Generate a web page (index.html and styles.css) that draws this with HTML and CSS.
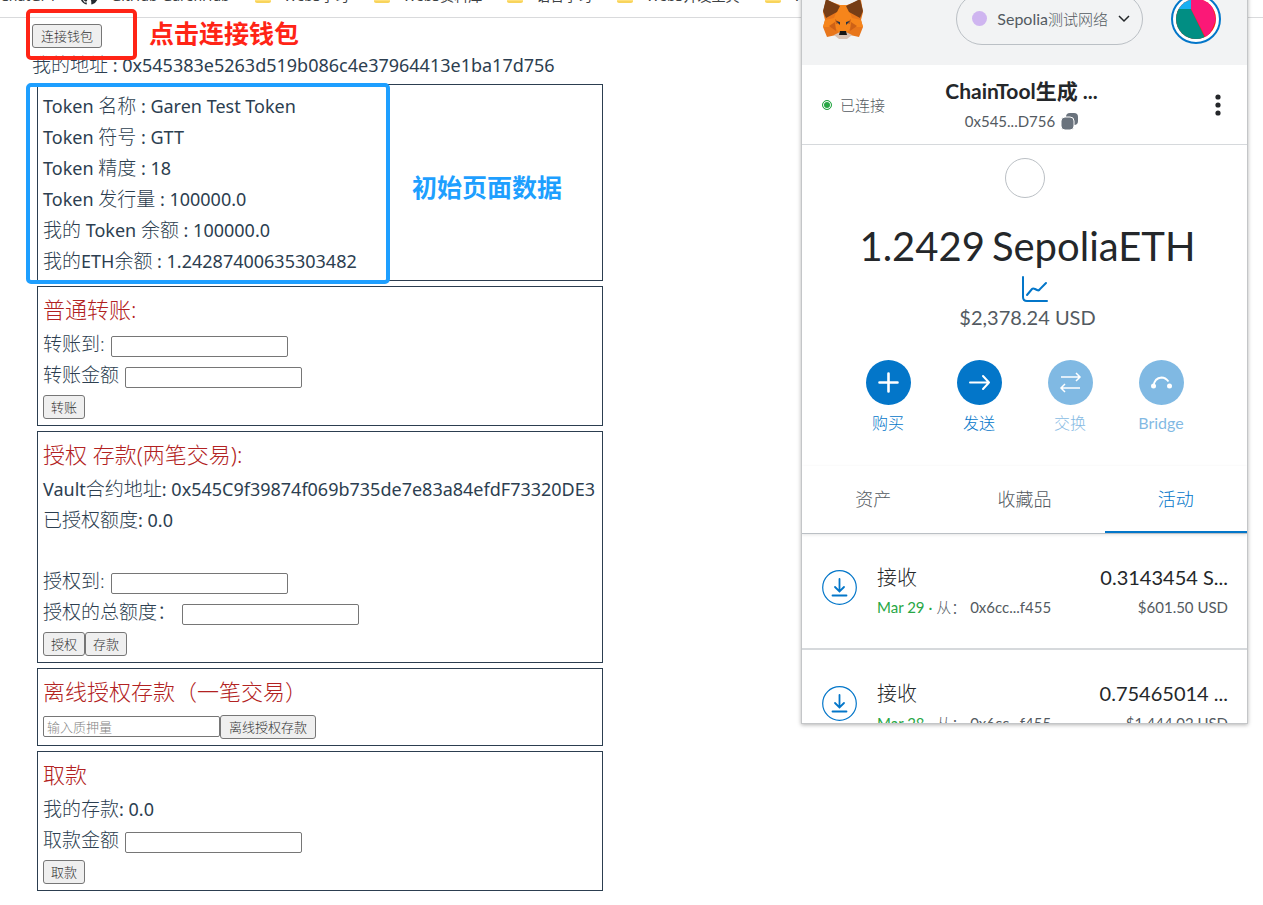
FILE: index.html
```html
<!DOCTYPE html>
<html lang="zh-CN">
<head>
<meta charset="utf-8">
<title>Token Bank</title>
<link rel="stylesheet" href="styles.css">
</head>
<body>
<nav class="bookmarks">
  <a href="#" class="mark mark-first">ChatGPT</a>
  <a href="#" class="mark mark-github"><svg width="18" height="18" viewBox="0 0 16 16"><path fill="#24292f" d="M8 0C3.58 0 0 3.58 0 8c0 3.54 2.29 6.53 5.47 7.59.4.07.55-.17.55-.38v-1.49c-2.01.37-2.53-.49-2.69-.94-.09-.23-.48-.94-.82-1.13-.28-.15-.68-.52-.01-.53.63-.01 1.08.58 1.23.82.72 1.21 1.87.87 2.33.66.07-.52.28-.87.51-1.07-1.78-.2-3.64-.89-3.64-3.95 0-.87.31-1.59.82-2.15-.08-.2-.36-1.02.08-2.12 0 0 .67-.21 2.2.82a7.6 7.6 0 0 1 4 0c1.53-1.04 2.2-.82 2.2-.82.44 1.1.16 1.92.08 2.12.51.56.82 1.27.82 2.15 0 3.07-1.87 3.75-3.65 3.95.29.25.54.73.54 1.48v2.2c0 .21.15.46.55.38A8 8 0 0 0 16 8c0-4.42-3.58-8-8-8z"/></svg>GitHub-GarenHub</a>
  <a href="#" class="mark"><i class="folder"></i>Web3学习</a>
  <a href="#" class="mark"><i class="folder"></i>Web3资料库</a>
  <a href="#" class="mark"><i class="folder"></i>语言学习</a>
  <a href="#" class="mark"><i class="folder"></i>Web3开发工具</a>
  <a href="#" class="mark"><i class="folder"></i>Web3</a>
</nav>

<main class="page">
  <div class="connect"><button type="button" class="btn">连接钱包</button><span class="frame frame-red"></span><strong class="note note-red">点击连接钱包</strong></div>
  <p class="address"><span class="zh">我的地址</span> : 0x545383e5263d519b086c4e37964413e1ba17d756</p>

  <section class="card card-info">
    <p class="row">Token&nbsp;<span class="zh">名称</span>&nbsp;: Garen Test Token</p>
    <p class="row">Token&nbsp;<span class="zh">符号</span>&nbsp;: GTT</p>
    <p class="row">Token&nbsp;<span class="zh">精度</span>&nbsp;: 18</p>
    <p class="row">Token&nbsp;<span class="zh">发行量</span>&nbsp;: 100000.0</p>
    <p class="row"><span class="zh">我的</span>&nbsp;Token&nbsp;<span class="zh">余额</span>&nbsp;: 100000.0</p>
    <p class="row"><span class="zh">我的</span>ETH<span class="zh">余额</span>&nbsp;: 1.24287400635303482</p>
    <span class="frame frame-blue"></span>
    <strong class="note note-blue">初始页面数据</strong>
  </section>

  <section class="card">
    <h2 class="title">普通转账:</h2>
    <div class="row"><label class="zh" for="to">转账到:</label><input class="field" id="to" type="text"></div>
    <div class="row"><label class="zh" for="amount">转账金额</label><input class="field" id="amount" type="text"></div>
    <div class="row"><button type="button" class="btn">转账</button></div>
  </section>

  <section class="card">
    <h2 class="title">授权 存款(两笔交易):</h2>
    <p class="row">Vault<span class="zh">合约地址</span>: 0x545C9f39874f069b735de7e83a84efdF73320DE3</p>
    <p class="row"><span class="zh">已授权额度</span>: 0.0</p>
    <p class="row row-blank"></p>
    <div class="row"><label class="zh" for="spender">授权到:</label><input class="field" id="spender" type="text"></div>
    <div class="row"><label class="zh" for="allow">授权的总额度：</label><input class="field" id="allow" type="text"></div>
    <div class="row"><button type="button" class="btn">授权</button><button type="button" class="btn">存款</button></div>
  </section>

  <section class="card">
    <h2 class="title">离线授权存款（一笔交易）</h2>
    <div class="row"><input class="field field-lead" type="text" placeholder="输入质押量" aria-label="输入质押量"><button type="button" class="btn">离线授权存款</button></div>
  </section>

  <section class="card">
    <h2 class="title">取款</h2>
    <p class="row"><span class="zh">我的存款</span>: 0.0</p>
    <div class="row"><label class="zh" for="draw">取款金额</label><input class="field" id="draw" type="text"></div>
    <div class="row"><button type="button" class="btn">取款</button></div>
  </section>
</main>

<aside class="wallet">
  <header class="wallet-head">
    <svg class="fox" width="42" height="40" viewBox="0 0 40 40">
      <path fill="#e8761b" d="M3 1 17 6h7L38 1l2 12-2 8 2 7-4 10-9-2-3 3h-8l-3-3-9 2L0 28l2-7-2-8z"/>
      <path fill="#f6851b" d="M16 6h8l5 13 9 2 2 7H28l-4 6h-8l-4-6H0l2-7 9-2z"/>
      <path fill="#763d16" d="M3 0 17 7l-3 6-11 6-3-7zM37 0 23 7l3 6 11 6 3-7z"/>
      <path fill="#cd6116" d="m6 27 6-4 1 9zM34 27l-6-4-1 9zM12 20l5 4-4 1zM28 20l-5 4 4 1z"/>
      <path fill="#d7c1b3" d="m11 36 6-3h6l6 3-5 4h-8z"/>
      <path fill="#233447" d="m13 22 4 1v3zM27 22l-4 1v3z"/>
      <path fill="#161616" d="M17 32h6l1 4h-8z"/>
    </svg>
    <button type="button" class="network"><i class="network-dot"></i><span><span class="latin">Sepolia</span>测试网络</span><svg width="12" height="8" viewBox="0 0 12 8" fill="none" stroke="#24272a" stroke-width="1.500"><path d="m1 1 5 5 5-5"/></svg></button>
    <svg class="avatar" width="50" height="50" viewBox="0 0 50 50">
      <circle cx="25" cy="25" r="24" fill="#fff" stroke="#0376c9" stroke-width="2"/>
      <clipPath id="disc"><circle cx="25" cy="25" r="20"/></clipPath>
      <g clip-path="url(#disc)"><path fill="#fc1e12" d="M0 0h50v50H0z"/><path fill="#018e83" d="M0 15h20l17 35H0z"/><path fill="#18b0f2" d="M0 0h20v15H0z"/><path fill="#fb1877" d="M20 0h18l7 26-9 20-16-31z"/></g>
    </svg>
  </header>
  <div class="account">
    <span class="status"><i class="status-dot"></i>已连接</span>
    <button type="button" class="account-id"><strong class="account-name">ChainTool生成 ...</strong><span class="account-addr">0x545...D756<svg width="17" height="17" viewBox="0 0 17 17"><rect x="5" width="12" height="12" rx="4" fill="#6a737d"/><rect y="4" width="13" height="13" rx="4" fill="#6a737d" stroke="#fff"/></svg></span></button>
    <button type="button" class="more" aria-label="更多"><svg width="6" height="22" viewBox="0 0 6 22" fill="#24272a"><circle cx="3" cy="3" r="2.6"/><circle cx="3" cy="11" r="2.6"/><circle cx="3" cy="19" r="2.6"/></svg></button>
  </div>
  <section class="overview">
    <i class="token"></i>
    <p class="balance"><span>1.2429</span><span>SepoliaETH</span></p>
    <svg class="chart" width="26" height="26" viewBox="0 0 26 26" fill="none" stroke="#0376c9" stroke-width="2" stroke-linecap="round"><path d="M1 1v20q0 4 4 4h20"/><path d="m5 19 5-6q1-1 3 0l2 1q2 1 3-1l6-6"/></svg>
    <p class="fiat">$2,378.24 USD</p>
    <div class="actions">
      <button type="button" class="action"><svg width="45" height="45" viewBox="0 0 45 45" fill="none" stroke="#fff" stroke-width="2.6" stroke-linecap="round"><circle cx="22.500" cy="22.500" r="22.500" fill="#0376c9" stroke="none"/><path d="M22.500 13.500v18M13.500 22.500h18"/></svg>购买</button>
      <button type="button" class="action"><svg width="45" height="45" viewBox="0 0 45 45" fill="none" stroke="#fff" stroke-width="2" stroke-linecap="round" stroke-linejoin="round"><circle cx="22.500" cy="22.500" r="22.500" fill="#0376c9" stroke="none"/><path d="M13 22.500h19M26 16l6 6.500-6 6.500"/></svg>发送</button>
      <button type="button" class="action action-off"><svg width="45" height="45" viewBox="0 0 45 45" fill="none" stroke="#fff" stroke-width="1.500"><circle cx="22.500" cy="22.500" r="22.500" fill="#0376c9" stroke="none"/><path d="M13 17h19M28 13l4 4-4 4M32 28H13M17 24l-4 4 4 4"/></svg>交换</button>
      <button type="button" class="action action-off"><svg width="45" height="45" viewBox="0 0 45 45" fill="none" stroke="#fff" stroke-width="1.800"><circle cx="22.500" cy="22.500" r="22.500" fill="#0376c9" stroke="none"/><circle cx="14.500" cy="26" r="2.500" fill="#fff" stroke="none"/><circle cx="30.500" cy="26" r="2.500" fill="#fff" stroke="none"/><path d="M14.500 26q1-8 8-8.500 4 0 7 4"/></svg><span class="latin">Bridge</span></button>
    </div>
  </section>
  <nav class="tabs"><button type="button" class="tab">资产</button><button type="button" class="tab">收藏品</button><button type="button" class="tab tab-on">活动</button></nav>
  <ul class="history">
    <li class="tx">
      <svg width="35" height="35" viewBox="0 0 35 35" fill="none" stroke="#0376c9" stroke-width="1.800" stroke-linecap="round"><circle cx="17.500" cy="17.500" r="16.800" stroke-width="1.200"/><path d="M17.500 9v12M13 17l4.500 4.500L22 17M10.500 25.500h14"/></svg>
      <div class="tx-main"><span class="tx-title">接收</span><span class="tx-sub">Mar 29 · <span class="tx-from">从：</span><span class="tx-addr">0x6cc...f455</span></span></div>
      <div class="tx-value"><span class="tx-amount">0.3143454 S...</span><span class="tx-fiat">$601.50 USD</span></div>
    </li>
    <li class="tx">
      <svg width="35" height="35" viewBox="0 0 35 35" fill="none" stroke="#0376c9" stroke-width="1.800" stroke-linecap="round"><circle cx="17.500" cy="17.500" r="16.800" stroke-width="1.200"/><path d="M17.500 9v12M13 17l4.500 4.500L22 17M10.500 25.500h14"/></svg>
      <div class="tx-main"><span class="tx-title">接收</span><span class="tx-sub">Mar 28 · <span class="tx-from">从：</span><span class="tx-addr">0x6cc...f455</span></span></div>
      <div class="tx-value"><span class="tx-amount">0.75465014 ...</span><span class="tx-fiat">$1,444.02 USD</span></div>
    </li>
  </ul>
</aside>
</body>
</html>
```
FILE: styles.css
```css
* { box-sizing: border-box; }
body {
  margin: 0;
  min-height: 100vh;
  position: relative;
  overflow: hidden;
  background: #fff;
  color: #2c3e50;
  font: 400 18px "Noto Sans", "Noto Sans CJK SC", sans-serif;
}
p, h2, ul { margin: 0; padding: 0; }
button { font-family: inherit; }

.bookmarks {
  display: flex;
  align-items: flex-start;
  gap: 25px;
  height: 34px;
  margin-top: -16px;
  border-bottom: 1px solid #d9dadc;
  white-space: nowrap;
}
.mark {
  display: flex;
  align-items: center;
  gap: 13px;
  height: 23px;
  color: #3c4043;
  font-size: 14px;
  line-height: 23px;
  text-decoration: none;
}
.mark-first { width: 55px; }
.folder {
  width: 16px;
  height: 15px;
  border-radius: 2px;
  background: #ffe07a;
  border-bottom: 2px solid #f8d45c;
}

.page {
  width: 45%;
  min-width: 571px;
  margin-left: 32px;
  padding-top: 3px;
}
.connect {
  position: relative;
  display: flex;
  align-items: center;
  height: 30px;
}
.address { line-height: 28px; white-space: nowrap; }
.zh { font-size: 19px; font-weight: 300; }
.card {
  position: relative;
  margin: 5px 0 0 5px;
  padding: 5px 5px 3px;
  border: 1px solid #2c3e50;
}
.card-info { padding-top: 6px; }
.row {
  display: flex;
  align-items: center;
  height: 31px;
  line-height: 31px;
  white-space: pre;
}
.row-blank { height: 30px; }
.title {
  margin-bottom: 3px;
  color: #b22222;
  font-size: 22px;
  font-weight: 300;
  line-height: 34px;
}
.btn {
  height: 24px;
  padding: 0 7px;
  border: 1px solid #767676;
  border-radius: 3px;
  background: #efefef;
  color: #333;
  font-size: 13px;
  font-weight: 300;
  line-height: 20px;
}
.connect .btn { padding: 0 8px; }
.field {
  width: 177px;
  height: 21px;
  margin: 3px 0 0 6px;
  padding: 1px 3px;
  border: 1px solid #767676;
  border-radius: 2px;
  font: 300 13px "Noto Sans", "Noto Sans CJK SC", sans-serif;
}
.field-lead { margin: 0; }
.field-lead + .btn { padding: 0 8px; }
.field::placeholder { color: #858585; }

.frame { position: absolute; border-radius: 5px; pointer-events: none; }
.frame-red { inset: -12px auto -9px -6px; width: 111px; border: 4px solid #ff2416; }
.frame-blue { inset: -2px auto -4px -12px; width: 364px; border: 4px solid #1e9fff; }
.note { position: absolute; font-size: 25px; font-weight: 700; line-height: 36px; white-space: nowrap; }
.note-red { left: 117px; top: -6px; color: #ff2416; }
.note-blue { left: 374px; top: 84px; color: #1e9fff; }

.wallet {
  position: absolute;
  top: -27px;
  right: 15px;
  width: 447px;
  height: 751px;
  overflow: hidden;
  border: 1px solid #c4c6c8;
  background: #fff;
  box-shadow: 0 1px 4px rgba(0, 0, 0, .3);
  color: #24272a;
  font-family: Lato, "Noto Sans CJK SC", sans-serif;
  font-weight: 400;
}
.wallet button { border: 0; background: none; }
.latin { font-weight: 400; }
.wallet-head {
  display: flex;
  align-items: center;
  height: 91px;
  padding: 0 26px 2px 20px;
  background: #f2f3f4;
}
.wallet .network {
  display: flex;
  align-items: center;
  gap: 10px;
  height: 52px;
  margin: 0 28px 0 auto;
  padding: 0 12px 0 15px;
  border: 1px solid #bbc0c5;
  border-radius: 26px;
  color: #535a61;
  font-size: 15px;
  font-weight: 300;
}
.network .latin { font-size: 16px; }
.network-dot { width: 15px; height: 15px; border-radius: 50%; background: #cfb5f0; }
.account {
  display: grid;
  grid-template-columns: 1fr auto 1fr;
  align-items: center;
  height: 80px;
  padding: 0 26px 0 20px;
  border-bottom: 1px solid #d6d9dc;
}
.status { display: flex; align-items: center; gap: 8px; color: #535a61; font-size: 15px; font-weight: 300; }
.status-dot { width: 10px; height: 10px; border: 1px solid #28a745; border-radius: 50%; background: #28a745; box-shadow: inset 0 0 0 1px #fff; }
.account-id { display: flex; flex-direction: column; align-items: center; gap: 3px; padding: 0; }
.account-name { color: #24272a; font-size: 21px; line-height: 30px; }
.account-addr { display: flex; align-items: center; gap: 6px; color: #535a61; font-size: 15px; line-height: 24px; }
.more { display: flex; justify-self: end; padding: 0; }
.overview { display: flex; flex-direction: column; align-items: center; height: 321px; padding-top: 13px; }
.token { width: 40px; height: 40px; border: 1px solid #bbc0c5; border-radius: 50%; }
.balance { display: flex; gap: 7px; margin-top: 24px; padding-left: 6px; font-size: 40px; line-height: 48px; }
.chart { margin: 6px 0 0 20px; }
.fiat { padding-left: 6px; color: #535a61; font-size: 20px; line-height: 31px; }
.actions { display: flex; gap: 31px; margin-top: 27px; }
.action { display: flex; flex-direction: column; align-items: center; gap: 6px; width: 60px; padding: 0; color: #0376c9; font-size: 16px; font-weight: 300; line-height: 24px; }
.action-off { opacity: .5; }
.tabs { display: flex; height: 68px; border-bottom: 1px solid #bbc0c5; box-shadow: 0 1px 3px rgba(0, 0, 0, .1); }
.tab { flex: 1 1 auto; padding: 0 0 4px; color: #535a61; font-size: 18px; font-weight: 300; }
.wallet .tab-on { padding-bottom: 2px; color: #0376c9; border-bottom: 2px solid #0376c9; }
.history { list-style: none; }
.tx { display: flex; align-items: flex-start; gap: 20px; height: 116px; padding: 29px 19px 0 20px; border-bottom: 2px solid #d6d9dc; }
.tx svg { margin-top: 7px; }
.tx-main, .tx-value { display: flex; flex-direction: column; }
.tx-value { margin-left: auto; align-items: flex-end; }
.tx-title, .tx-amount { font-size: 20px; line-height: 29px; }
.tx-title { font-weight: 300; }
.tx-sub, .tx-fiat { color: #535a61; font-size: 15px; line-height: 30px; }
.tx-sub { color: #28a745; }
.tx-from { color: #535a61; font-weight: 300; }
.tx-addr { margin-left: 4px; color: #535a61; }
```
